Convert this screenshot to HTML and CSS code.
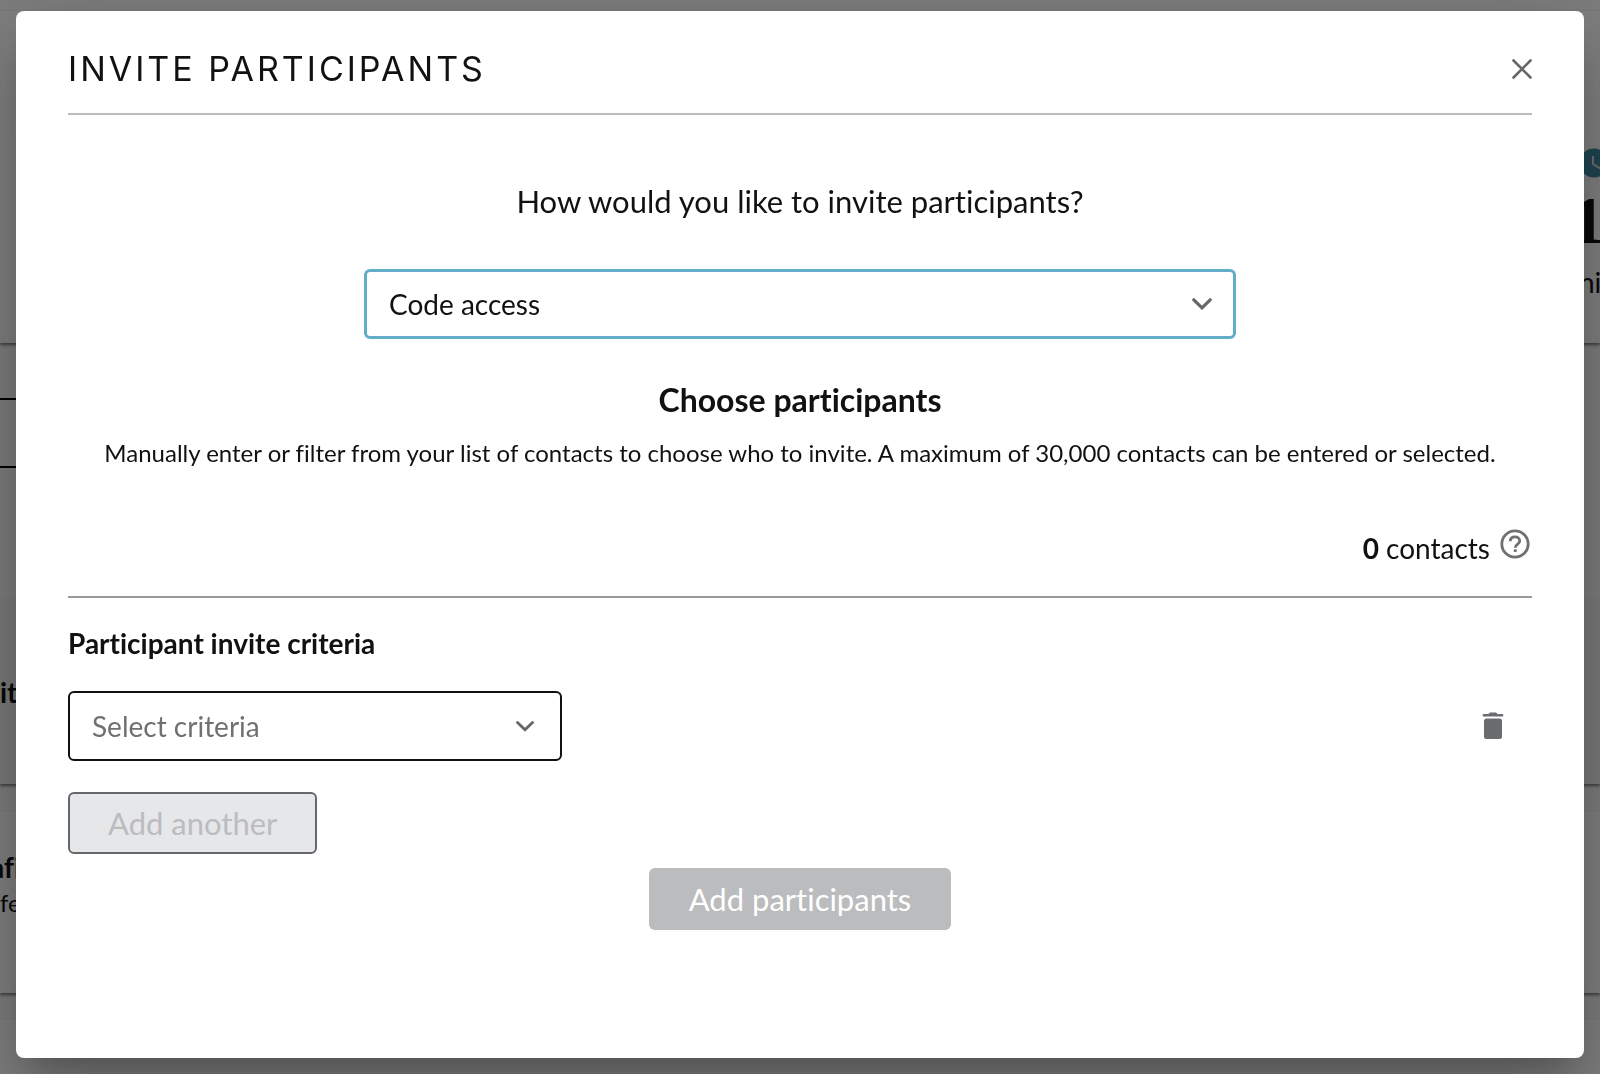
FILE: index.html
```html
<!DOCTYPE html>
<html lang="en">
<head>
<meta charset="utf-8">
<meta name="viewport" content="width=device-width, initial-scale=1">
<title>Invite participants</title>
<link rel="stylesheet" href="styles.css">
</head>
<body>
<div class="page" aria-hidden="true">
  <section class="card card-summary">
    <div class="summary">
      <svg class="clock" viewBox="0 0 30 30"><circle cx="15" cy="15" r="14.500" fill="#3f8aa3"/><path d="M14 8v8l8 5" fill="none" stroke="#ddd" stroke-width="2"/></svg>
      <div class="summary-number">1</div>
      <div class="summary-unit">ni</div>
    </div>
  </section>
  <div class="search-field"></div>
  <section class="card card-title"><div class="strong">it</div></section>
  <section class="card card-detail"><div class="strong cut">afi</div><div class="small">fe</div></section>
  <section class="card card-rest"></section>
</div>

<div class="overlay">
  <main class="modal" role="dialog" aria-modal="true" aria-labelledby="title">
    <header class="modal-header">
      <h1 class="modal-title" id="title">INVITE PARTICIPANTS</h1>
      <button class="icon-button" type="button" aria-label="Close">
        <svg width="20" height="20" viewBox="0 0 20 20"><path d="M1.500 1.500l17 17M18.500 1.500l-17 17" fill="none" stroke="#666" stroke-width="2.600" stroke-linecap="round"/></svg>
      </button>
    </header>

    <form class="form">
      <label class="question" for="method">How would you like to invite participants?</label>
      <div class="select-wrap method">
        <select class="select select-active" id="method"><option>Code access</option></select>
        <svg class="chevron" width="20" height="12" viewBox="0 0 20 12"><path d="M1.800 1.800L10 9.800l8.200-8" fill="none" stroke="#666" stroke-width="3.200" stroke-linecap="round"/></svg>
      </div>

      <h2 class="choose">Choose participants</h2>
      <p class="hint">Manually enter or filter from your list of contacts to choose who to invite. A maximum of 30,000 contacts can be entered or selected.</p>

      <div class="count">
        <span><b>0</b> contacts</span>
        <button class="icon-button help" type="button" aria-label="Help">
          <svg width="30" height="30" viewBox="0 0 30 30" fill="none" stroke="#707070" stroke-width="2.800"><circle cx="15" cy="15" r="13.200"/><path d="M10.300 12.200c0-2.700 1.900-4.300 4.700-4.300s4.700 1.700 4.700 4c0 3.400-4.500 3.400-4.500 6.800"/><path d="M15.200 20.300v2.700"/></svg>
        </button>
      </div>

      <label class="criteria-label" for="criteria">Participant invite criteria</label>
      <div class="criteria-row">
        <div class="select-wrap criteria">
          <select class="select placeholder" id="criteria"><option>Select criteria</option></select>
          <svg class="chevron" width="18" height="11" viewBox="0 0 18 11"><path d="M1.500 1.500L9 8.800l7.500-7.300" fill="none" stroke="#666" stroke-width="2.800" stroke-linecap="round"/></svg>
        </div>
        <button class="icon-button" type="button" aria-label="Delete criteria">
          <svg width="22" height="28" viewBox="0 0 22 28" fill="#6b6c6f"><path d="M1.500 2h5L8 .500h6L15.500 2h5q.8 0 .8 1.200t-.8 1.200h-19q-.8 0-.8-1.200T1.500 2z"/><rect x="2" y="6.500" width="18" height="20.500" rx="2.500"/></svg>
        </button>
      </div>
      <button class="button button-secondary" type="button" disabled>Add another</button>
      <button class="button button-primary" type="submit" disabled>Add participants</button>
    </form>
  </main>
</div>
</body>
</html>
```
FILE: styles.css
```css
* { box-sizing: border-box; }

body {
  margin: 0;
  min-height: 100vh;
  overflow: hidden;
  background: #fafafa;
  color: #111;
  font-family: Lato, "Liberation Sans", sans-serif;
  font-size: 28px;
  font-variant-ligatures: none;
  line-height: 36px;
}

/* Page behind the dialog */
.page {
  display: flex;
  flex-direction: column;
  height: 100vh;
  padding-top: 11px;
  overflow: hidden;
}
.card {
  flex: none;
  margin-bottom: 27px;
  background: #fff;
  box-shadow: 0 2px 3px rgba(0, 0, 0, .5);
}
.card-summary {
  display: flex;
  justify-content: flex-end;
  height: 332px;
  margin-bottom: 55px;
  padding-top: 137px;
}
.summary { width: 21px; white-space: nowrap; }
.clock { display: block; width: 30px; height: 30px; }
.summary-number {
  margin-left: -8px;
  font-family: "Liberation Serif", serif;
  font-size: 68px;
  font-weight: 700;
  line-height: 84px;
}
.summary-unit { line-height: 40px; }
.search-field {
  flex: none;
  width: 50%;
  height: 70px;
  margin-bottom: 132px;
  border: solid #000;
  border-width: 2px 0;
}
.card-title { height: 184px; padding-top: 74px; background: #f3f3f3; }
.card-detail { height: 182px; padding-top: 38px; }
.card-rest { height: 60px; }
.strong { font-weight: 700; }
.cut { margin-left: -10px; }
.small { font-size: 24px; line-height: 36px; }

/* Dialog */
.overlay {
  position: fixed;
  inset: 0;
  display: grid;
  padding: 11px 16px 16px;
  overflow: auto;
  background: rgba(0, 0, 0, .5);
}
.modal {
  padding: 0 52px 52px;
  border-radius: 8px;
  background: #fff;
  box-shadow: 0 22px 30px -14px rgba(0, 0, 0, .2), 0 48px 76px 6px rgba(0, 0, 0, .14), 0 18px 92px 16px rgba(0, 0, 0, .12);
}
.modal-header {
  display: flex;
  align-items: center;
  justify-content: space-between;
  padding: 36px 0 22px;
  border-bottom: 2px solid #bbb;
}
.modal-title {
  margin: 0;
  font-family: Inter, "Liberation Sans", sans-serif;
  font-size: 34px;
  font-weight: 400;
  line-height: 44px;
  letter-spacing: 3px;
}
.icon-button {
  display: flex;
  padding: 0;
  border: 0;
  background: none;
}
.form { display: flex; flex-direction: column; }
.question {
  margin-top: 66px;
  font-size: 31px;
  line-height: 40px;
  text-align: center;
}
.select-wrap { display: grid; align-items: center; }
.select-wrap > * { grid-area: 1 / 1; }
.select {
  width: 100%;
  height: 70px;
  padding: 0 22px;
  appearance: none;
  border: 2px solid #111;
  border-radius: 6px;
  background: #fff;
  color: #111;
  font: inherit;
}
.select-active { border: 3px solid #62adc7; }
.placeholder { color: #707070; }
.chevron { justify-self: end; margin-right: 24px; pointer-events: none; }
.criteria .chevron { margin-right: 28px; }
.method { align-self: center; width: 60%; max-width: 872px; margin-top: 48px; }
.choose {
  margin: 41px 0 0;
  font-size: 32px;
  line-height: 40px;
  text-align: center;
}
.hint {
  margin: 17px 0 0;
  font-size: 24px;
  line-height: 32px;
  text-align: center;
}
.count {
  display: flex;
  align-items: center;
  justify-content: flex-end;
  gap: 10px;
  padding: 60px 2px 29px 0;
  border-bottom: 2px solid #999;
}
.help { margin-bottom: 8px; }
.criteria-label { margin-top: 27px; font-weight: 700; }
.criteria-row {
  display: flex;
  align-items: center;
  justify-content: space-between;
  margin-top: 30px;
  padding-right: 28px;
}
.criteria { width: 494px; }
.button {
  height: 62px;
  padding: 0 38px;
  border: 0;
  border-radius: 6px;
  font: inherit;
  font-size: 31px;
}
.button-secondary {
  align-self: flex-start;
  margin-top: 31px;
  border: 2px solid #66676a;
  background: #e6e7e9;
  color: #bbbcbe;
}
.button-primary {
  align-self: center;
  margin-top: 14px;
  padding: 0 40px;
  background: #bbbcbe;
  color: #fff;
}
```
